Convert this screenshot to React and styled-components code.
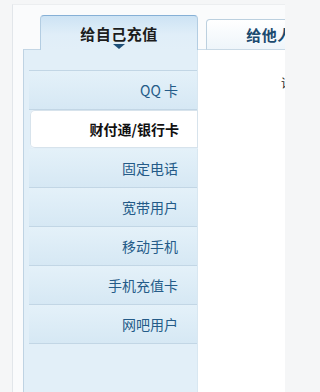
import React from 'react';
import styled, { createGlobalStyle } from 'styled-components';

const GlobalStyle = createGlobalStyle`
  html, body {
    margin: 0;
    padding: 0;
    background: #f5f6f7;
    overflow: hidden;
  }
  * {
    box-sizing: border-box;
  }
`;

const Page = styled.div`
  width: 285px;
  height: 392px;
  padding: 4px 0 0 12px;
  background: #f5f6f7;
  font-family: 'Noto Sans CJK SC', 'Noto Sans', sans-serif;
  overflow: hidden;
`;

const Frame = styled.div`
  height: 100%;
  padding: 11px 0 0 10px;
  background: #fafbfc;
  border-left: 1px solid #e2e6ea;
  border-top: 1px solid #eceef0;
  display: flex;
  flex-direction: column;
  overflow: hidden;
`;

const TabRow = styled.div`
  display: flex;
  align-items: flex-end;
  height: 34px;
  margin-bottom: -1px;
  padding-left: 17px;
  gap: 8px;
`;

const Tab = styled.div`
  position: relative;
  z-index: 1;
  flex-shrink: 0;
  width: 158px;
  display: flex;
  flex-direction: column;
  align-items: center;
  border-radius: 4px 4px 0 0;
  font-size: 15px;
  font-weight: 700;
  letter-spacing: 0.5px;
  height: ${({ active }) => (active ? '35px' : '31px')};
  padding-top: ${({ active }) => (active ? '8px' : '5px')};
  color: ${({ active }) => (active ? '#1c1c1c' : '#1b4a6f')};
  border: 1px solid ${({ active }) => (active ? '#b3cde2' : '#bcd0df')};
  border-top-color: ${({ active }) => (active ? '#86b0d6' : '#bcd0df')};
  border-bottom: ${({ active }) => (active ? 'none' : '1px solid #c9d9e5')};
  background: ${({ active }) =>
    active
      ? 'linear-gradient(#cde3f4, #e0eef8 55%, #e2eff8)'
      : 'linear-gradient(#ffffff, #eef5fa)'};
`;

const TabLabel = styled.span`
  line-height: 19px;
`;

const TabArrow = styled.span`
  margin-top: 1px;
  width: 0;
  height: 0;
  border-left: 6px solid transparent;
  border-right: 6px solid transparent;
  border-top: 5px solid #1e4f78;
`;

const Body = styled.div`
  flex: 1;
  display: flex;
  min-width: 0;
`;

const Sidebar = styled.div`
  flex-shrink: 0;
  width: 175px;
  padding: 20px 0 0 5px;
  background: #e2eff8;
  border-left: 1px solid #bfd3e3;
  border-top: 1px solid #c3d6e5;
  border-right: 1px solid #d8e7f1;
`;

const Menu = styled.ul`
  list-style: none;
  margin: 0;
  padding: 0;
  border-top: 1px solid #c2d6e5;
`;

const Item = styled.li`
  height: 39px;
  display: flex;
  align-items: center;
  justify-content: flex-end;
  padding-right: 19px;
  font-size: 14px;
  border-bottom: 1px solid ${({ active }) => (active ? '#e2eff8' : '#c2d6e5')};
  margin-left: ${({ active }) => (active ? '1px' : '0')};
  margin-right: ${({ active }) => (active ? '-1px' : '0')};
  border-radius: ${({ active }) => (active ? '5px 0 0 5px' : '0')};
  color: ${({ active }) => (active ? '#111' : '#245b88')};
  font-weight: ${({ active }) => (active ? 700 : 400)};
  background: ${({ active }) =>
    active ? '#ffffff' : 'linear-gradient(#e4f1f9, #d6e8f4)'};
  box-shadow: ${({ active }) => (active ? 'inset 0 0 0 1px #d7e3ec' : 'none')};
`;

const Content = styled.div`
  flex: 1;
  min-width: 0;
  overflow: hidden;
  background: #ffffff;
  border-top: 1px solid #cddde9;
  padding: 24px 0 0 83px;
  font-size: 12px;
  color: #222;
  white-space: nowrap;
`;

const items = ['QQ 卡', '财付通/银行卡', '固定电话', '宽带用户', '移动手机', '手机充值卡', '网吧用户'];

export default function App() {
  return (
    <>
      <GlobalStyle />
      <Page>
        <Frame>
          <TabRow>
            <Tab active>
              <TabLabel>给自己充值</TabLabel>
              <TabArrow />
            </Tab>
            <Tab>
              <TabLabel>给他人充值</TabLabel>
            </Tab>
          </TabRow>
          <Body>
            <Sidebar>
              <Menu>
                {items.map((label, i) => (
                  <Item key={label} active={i === 1}>
                    {label}
                  </Item>
                ))}
              </Menu>
            </Sidebar>
            <Content>请</Content>
          </Body>
        </Frame>
      </Page>
    </>
  );
}
